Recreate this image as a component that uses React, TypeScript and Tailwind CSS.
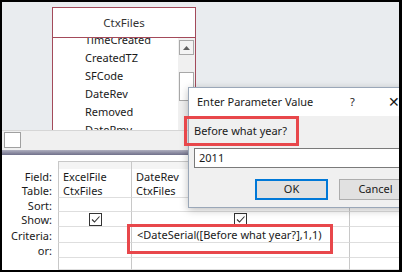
import React from "react";

const font = { fontFamily: '"Noto Sans", "Open Sans", sans-serif' };

function Check() {
  return (
    <div className="w-[13px] h-[13px] border border-[#333] bg-white flex items-center justify-center">
      <svg width="11" height="11" viewBox="0 0 11 11">
        <path d="M2 5.5 L4.5 8 L9.5 2.5" fill="none" stroke="#333" strokeWidth="1.1" />
      </svg>
    </div>
  );
}

const labels = ["Field:", "Table:", "Sort:", "Show:", "Criteria:", "or:", ""];
const rowH = ["h-[14px]", "h-[15px]", "h-[14px]", "h-[15px]", "h-[16px]", "h-[15px]", "h-[12px]"];

export default function App() {
  const items = ["TimeCreated", "CreatedTZ", "SFCode", "DateRev", "Removed", "DateRmv"];
  return (
    <div className="w-[402px] h-[272px] bg-black pt-[2px] pl-[2px] pr-[3px] pb-[2px] text-[11px] text-[#1a1a1a]" style={font}>
      <div className="relative flex flex-col h-full bg-white overflow-hidden">
        {/* top pane */}
        <div className="h-[129px] bg-[#e9ecef] pl-[50px] pt-[5px] overflow-hidden">
          <div className="w-[144px] h-[140px] border border-[#a34a5a] bg-white flex flex-col">
            <div className="h-[30px] border-b border-[#a34a5a] flex items-center justify-center text-[11.5px] text-[#333]">
              CtxFiles
            </div>
            <div className="flex flex-1 overflow-hidden">
              <div className="flex-1 overflow-hidden">
                <div className="mt-[-7px] pl-[32px] flex flex-col">
                  {items.map((t) => (
                    <div key={t} className="h-[18px] leading-[18px] text-[11px]">{t}</div>
                  ))}
                </div>
              </div>
              <div className="w-[17px] bg-[#f0f0f0] flex flex-col items-center pt-[2px]">
                <div className="w-[15px] h-[15px] border border-[#a8a8a8] bg-[#f4f4f4] flex items-center justify-center">
                  <svg width="7" height="4" viewBox="0 0 7 4"><path d="M0 4 L3.5 0 L7 4 Z" fill="#606060" /></svg>
                </div>
                <div className="mt-[17px] w-[15px] h-[29px] border border-[#a8a8a8] bg-white" />
              </div>
            </div>
          </div>
        </div>
        {/* strip */}
        <div className="h-[20px] bg-[#f0f0f0] border-t border-[#d6d6d6] pl-[2px] pt-[1px]">
          <div className="w-[17px] h-[16px] border border-[#a0a0a0] bg-white" />
        </div>
        {/* splitter */}
        <div className="h-[5px] bg-gradient-to-b from-[#b0b0c0] to-[#70708a]" />
        {/* grid pane */}
        <div className="flex-1 pt-[6px] bg-white">
          <div className="grid grid-cols-[56px_73px_218px_1fr]">
            <div className="h-[8px]" />
            <div className="h-[8px] border-l border-t border-[#c8c8c8] bg-[#f4f4f4]" />
            <div className="h-[8px] border-l border-t border-[#c8c8c8] bg-[#f4f4f4]" />
            <div className="h-[8px] border-l border-t border-[#c8c8c8] bg-[#f4f4f4]" />
            {labels.map((l, i) => (
              <React.Fragment key={i}>
                <div className={`${rowH[i]} flex items-center justify-end pr-[6px] leading-none`}>{l}</div>
                <div className={`${rowH[i]} border-l border-[#c8c8c8] ${i >= 1 ? "border-b border-b-[#dedede]" : ""} flex items-center pl-[4px] leading-none`}>
                  {i === 0 ? "ExcelFile" : i === 1 ? "CtxFiles" : i === 3 ? <div className="w-full flex justify-center pr-[4px]"><Check /></div> : ""}
                </div>
                <div className={`${rowH[i]} border-l border-[#c8c8c8] ${i >= 1 ? "border-b border-b-[#dedede]" : ""} flex items-center pl-[4px] leading-none`}>
                  {i === 0 ? "DateRev" : i === 1 ? "CtxFiles" : i === 3 ? <div className="w-full flex justify-center pr-[4px]"><Check /></div> : i === 4 ? <span className="pl-[1px]">&lt;DateSerial([Before what year?],1,1)</span> : ""}
                </div>
                <div className={`${rowH[i]} border-l border-[#c8c8c8] ${i >= 1 ? "border-b border-b-[#dedede]" : ""}`} />
              </React.Fragment>
            ))}
          </div>
        </div>

        {/* dialog */}
        <div className="absolute left-[186px] top-[85px] w-[240px] h-[121px] border border-[#9aa7b8] bg-[#f0f0f0] shadow-[0_2px_8px_rgba(0,0,0,0.25)] flex flex-col">
          <div className="h-[28px] bg-white flex items-center pl-[8px] text-[11px]">
            <span className="w-[153px]">Enter Parameter Value</span>
            <span className="w-[38px]">?</span>
            <span className="text-[14px] font-light leading-none">✕</span>
          </div>
          <div className="pl-[5px] pt-[7px] flex flex-col">
            <div className="h-[16px] leading-[16px] text-[11px]">Before what year?</div>
            <div className="mt-[9px] h-[20px] mr-[14px] border border-[#7a7a7a] bg-white pl-[4px] flex items-center">2011</div>
            <div className="mt-[11px] flex gap-[11px] pl-[61px]">
              <div className="w-[73px] h-[21px] border-2 border-[#0078d7] bg-[#e1e1e1] flex items-center justify-center">OK</div>
              <div className="w-[73px] h-[21px] border border-[#adadad] bg-[#e1e1e1] flex items-center justify-center">Cancel</div>
            </div>
          </div>
        </div>

        {/* annotation boxes */}
        <div className="absolute left-[182px] top-[114px] w-[115px] h-[30px] border-[3px] border-[#e8474b]" />
        <div className="absolute left-[125px] top-[222px] w-[206px] h-[30px] border-[3px] border-[#e8474b]" />
      </div>
    </div>
  );
}
